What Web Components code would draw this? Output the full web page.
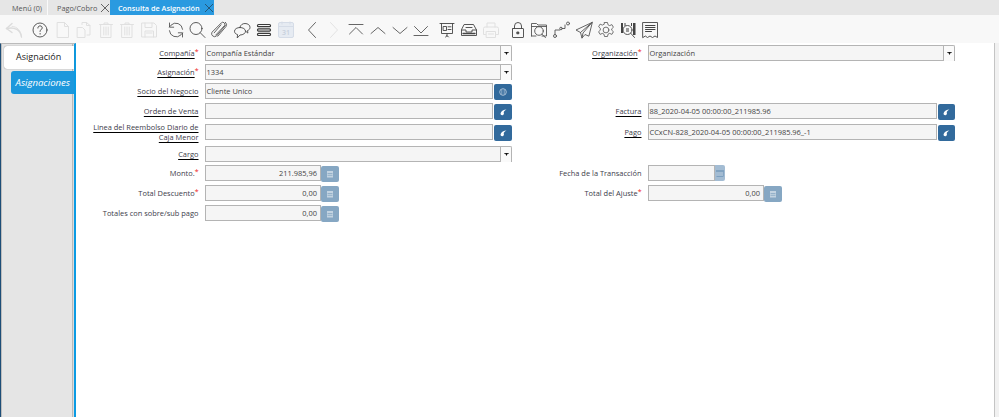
<!DOCTYPE html>
<html lang="es"><head><meta charset="utf-8"><title>Consulta de Asignación</title>
<style>
html,body{margin:0;height:100%;overflow:hidden;background:#fff;font-family:"Open Sans",sans-serif}
body{display:flex;flex-direction:column;width:999px;height:417px}
.main{flex:1;display:flex;min-height:0;background:#f1f1f1}
</style></head><body>
<erp-tabs>
  <erp-tab w="48" style="--pl:12px">Menú (0)</erp-tab>
  <erp-tab w="62" closable style="--pl:9px">Pago/Cobro</erp-tab>
  <erp-tab w="104" closable active style="--pl:8px">Consulta de Asignación</erp-tab>
</erp-tabs>
<erp-toolbar></erp-toolbar>
<div class="main">
  <erp-sidebar>
    <erp-side-tab selected>Asignación</erp-side-tab>
    <erp-side-tab>Asignaciones</erp-side-tab>
  </erp-sidebar>
  <erp-form>
    <erp-field style="grid-area:1/1" label="Compañía" req link kind="select" value="Compañía Estándar"></erp-field>
    <erp-field style="grid-area:1/2" side="r" label="Organización" req link kind="select" value="Organización"></erp-field>
    <erp-field style="grid-area:2/1" label="Asignación" req link kind="select" value="1334"></erp-field>
    <erp-field style="grid-area:3/1" label="Socio del Negocio" link kind="bp" value="Cliente Unico"></erp-field>
    <erp-field style="grid-area:4/1" label="Orden de Venta" link kind="search"></erp-field>
    <erp-field style="grid-area:4/2" side="r" label="Factura" link kind="search" value="88_2020-04-05 00:00:00_211985.96"></erp-field>
    <erp-field style="grid-area:5/1" label="Linea del Reembolso Diario de Caja Menor" link kind="search"></erp-field>
    <erp-field style="grid-area:5/2" side="r" label="Pago" link kind="search" value="CCxCN-828_2020-04-05 00:00:00_211985.96_-1"></erp-field>
    <erp-field style="grid-area:6/1" label="Cargo" link kind="select"></erp-field>
    <erp-field style="grid-area:7/1" label="Monto." req kind="calc" value="211.985,96"></erp-field>
    <erp-field style="grid-area:7/2" side="r" label="Fecha de la Transacción" kind="date"></erp-field>
    <erp-field style="grid-area:8/1" label="Total Descuento" req kind="calc" value="0,00"></erp-field>
    <erp-field style="grid-area:8/2" side="r" label="Total del Ajuste" req kind="calc" value="0,00"></erp-field>
    <erp-field style="grid-area:9/1" label="Totales con sobre/sub pago" kind="calc" value="0,00"></erp-field>
  </erp-form>
</div>
<script>
const D='#e0e0e0', K='#555555', S='#4a4a4a';
const g=(c,w,body)=>`<g fill="none" stroke="${c}" stroke-width="${w}" stroke-linecap="round" stroke-linejoin="round">${body}</g>`;
const ICONS={
 undo:g('#dcdcdc',1.4,'<path d="M2.500 8.500 8 3.500M2.500 8.500 8 12.500"/><path d="M2.500 8.500C11 6.500 16.500 10 17.500 17"/><path d="M8 6.300c5 .3 9 4 9.500 10.700" stroke-width=".8"/>'),
 help:g(S,.9,'<circle cx="10" cy="10" r="7"/><path d="M7.900 8c0-1.400 1-2.100 2.200-2.100s2.100.8 2.100 1.900c0 1.700-2.200 1.800-2.200 3.600" stroke-width="1"/><path d="M10.100 13.500v.5" stroke-width="1.100"/>'),
 doc:g(D,1,'<path d="M4.500 2.500h7l4 4v11h-11zM11.500 2.500v4h4"/>'),
 copy:g(D,1,'<path d="M3.500 7.500h5l2.500 2.500v7.500h-7.500zM8 4.500V2.500h4.500l3.500 3v9.500h-3"/><path d="M12.500 2.500v3h3.500"/>'),
 trash:g(D,1,'<path d="M3.500 4.500h13M8 4.500V3h4v1.500M5 4.500h10v13H5zM7.800 7v8M10 7v8M12.200 7v8"/>'),
 save:g(D,1,'<path d="M3 3h12l2.500 2.500V17H3zM6 3v4.500h7V3M6 17v-6h8.500v6M7.500 13h5.500"/>'),
 refresh:g(K,.9,'<path d="M16.600 9.300A6.800 6.800 0 0 0 5 5.200L3.400 7"/><path d="M3.500 3v4.200h4.200" /><path d="M3.400 10.700A6.800 6.800 0 0 0 15 14.800L16.600 13"/><path d="M16.500 17v-4.200h-4.200"/>'),
 search:g(S,.9,'<circle cx="9" cy="8.500" r="6"/><path d="M13.300 12.800 18 17.500"/>'),
 attach:g(K,.9,'<path d="M16.300 5.500 7.500 16a3 3 0 0 1-4.500-3.800L12.300 2.900a2.100 2.100 0 0 1 3.200 2.700L6.800 15"/><path d="M5.200 12.800 12 4.800M8.800 16.200 17 6.500a3.300 3.300 0 0 0-.5-4.200"/>'),
 chat:g(S,.9,'<path d="M8 7.500c3 0 5.500 1.500 5.500 3.700S11 15 8 15l-2.800 3 .4-3.400C3.500 14 2.500 12.800 2.500 11.200 2.500 9 5 7.500 8 7.500z"/><path d="M8 7c.5-2 2.500-3.500 5-3.500 3 0 5 1.700 5 3.800 0 1.500-.8 2.700-2.500 3.200l.4 2.600-2.600-2.200"/>'),
 list:g('#3a3a3a',1.200,'<rect x="3.500" y="4.500" width="13" height="2.200" rx="1"/><rect x="3.500" y="8.900" width="13" height="2.200" rx="1"/><rect x="3.500" y="13.300" width="13" height="2.200" rx="1"/>'),
 cal:`<rect x="2.500" y="2.500" width="15" height="15" rx="1.500" fill="#e6ebf2" stroke="#d5dce7"/><path d="M2.500 6.500h15" stroke="#d5dce7"/><path d="M6 1.500v3M14 1.500v3" stroke="#d5dce7"/><text x="10" y="15" font-size="7" font-family="Open Sans" font-weight="600" text-anchor="middle" fill="#c8d0dc">31</text>`,
 prev:g(K,.9,'<path d="M13.500 2.500 6.500 10l7 7.500"/>'),
 next:g(D,.9,'<path d="M6.500 2.500l7 7.500-7 7.500"/>'),
 first:g(K,.9,'<path d="M3 4.500h14M3.500 14 10 7.500l6.500 6.500"/>'),
 up:g(K,.9,'<path d="M3 13.500 10 7.500l7 6"/>'),
 down:g(K,.9,'<path d="M3 7.500l7 6 7-6"/>'),
 last:g(K,.9,'<path d="M3.500 6.500 10 13l6.500-6.500M3 15.500h14"/>'),
 report:g('#444',.9,'<path d="M3 3.500h14M4.500 3.500v10h11v-10M6.500 6.500h3v4h-3zM11 6.800h3M11 9.500h3M10 13.500v3M8.500 17l1.500-1.500 1.500 1.500"/>'),
 archive:g('#444',.9,'<path d="M5.500 4.500h9l3 5.500v5.500h-15V10zM2.500 10H7v2h6v-2h4.500M7 7.500h6"/><path d="M4 13.500h12" stroke-width="1.300"/>'),
 print:g(D,1,'<path d="M6 7V3h8v4M4.500 14.500H2.500V8.500a1.500 1.500 0 0 1 1.500-1.500h12a1.500 1.500 0 0 1 1.500 1.500v6h-2M5.500 11.500h9v6h-9zM7.500 14h5"/>'),
 lock:g('#444',.9,'<rect x="4.500" y="8.500" width="11" height="9" rx=".5"/><path d="M6.500 8.500V6a3.500 3.500 0 0 1 7 0v2.500"/><rect x="9.200" y="12" width="1.600" height="1.800" fill="#444"/>'),
 zoom:g(K,.9,'<path d="M2.500 16V3.500h5l1.500 1.500h8.500v11H13M2.500 16H7M2.500 6.500h15"/><circle cx="10" cy="11" r="4.300"/><path d="M13 14.200l3.500 3.500"/>'),
 flow:g(K,.9,'<circle cx="4" cy="16" r="1.500"/><circle cx="10" cy="8.500" r="1.300" /><circle cx="17" cy="3.500" r="1.500"/><path d="M4 14.500V10h4.700M11.300 8.500H14V5"/>'),
 send:g(K,.9,'<path d="M18 2.500 2 10l4.500 2.500L8 18l3-3.500 3.500 1.500zM18 2.500 6.500 12.500M18 2.500 9 13l-1 5"/>'),
 gear:g('#666',.9,'<path d="M8.500 2.500h3l.5 2.300 1.700.8 2.200-1 1.500 2.700-1.700 1.500v1.400l1.700 1.500-1.500 2.700-2.200-1-1.700.8-.5 2.300h-3l-.5-2.300-1.700-.8-2.200 1-1.500-2.700 1.700-1.500V8.300L2.600 6.800l1.500-2.700 2.200 1 1.700-.8z"/><circle cx="10" cy="10" r="2.900"/>'),
 barcode:`<g fill="#444"><rect x="3" y="3" width="2" height="10"/><rect x="6.500" y="3" width="1" height="3"/><rect x="13" y="3" width="1" height="3"/><rect x="15" y="3" width="2.500" height="12"/></g>`+g('#444',.9,'<circle cx="9.500" cy="10" r="4.500"/><path d="M12.800 13.300 16.500 17.500"/>')+'<rect x="8" y="8" width="3" height="4" fill="#999"/>',
 receipt:g('#444',.9,'<path d="M3 2.500h14.500v15l-2.500-1.500-2.500 1.500-2.500-1.500-2.500 1.500-2.200-1.500L3 17.500z"/><path d="M5.500 5.500h9.500M5.500 7.500h9.500M5.500 9.500h9.500M5.500 11.500h6" stroke-width="1"/>')
};
const BAR=[['undo',14],['help',40],['doc',63],['copy',84],['trash',106],['trash',127],['save',149],['refresh',176],['search',197],['attach',219],['chat',242],['list',264],['cal',286],['prev',312],['next',334],['first',356],['up',378],['down',400],['last',421],['report',447],['archive',469],['print',491],['lock',518],['zoom',539],['flow',561],['send',584],['gear',606],['barcode',628],['receipt',650]];

class Base extends HTMLElement{
  render(html){ (this.shadowRoot||this.attachShadow({mode:'open'})).innerHTML=html; }
}
customElements.define('erp-tabs',class extends Base{connectedCallback(){this.render(`<style>
:host{display:flex;height:15px;background:#e6e6e6;flex:none}</style><slot></slot>`)}});
customElements.define('erp-tab',class extends Base{connectedCallback(){
 const a=this.hasAttribute('active'),c=this.hasAttribute('closable');
 this.render(`<style>
:host{display:flex;align-items:center;box-sizing:border-box;width:${this.getAttribute('w')}px;height:15px;padding-left:var(--pl);font:${a?600:400} 7.300px "Open Sans",sans-serif;white-space:nowrap;position:relative;
 color:${a?'#fff':'#555'};background:${a?'#2a9ae0':'transparent'};${!c?'border-right:1px solid #fafafa;':''}}
svg{position:absolute;right:0;top:3px}
</style><slot></slot>${c?`<svg width="10" height="10" viewBox="0 0 10 10"><path d="M1 1l8 8M9 1 1 9" stroke="${a?'#24506f':'#555'}" stroke-width=".9" fill="none"/></svg>`:''}`);
}});
customElements.define('erp-toolbar',class extends Base{connectedCallback(){
 let x=0,h='';
 for(const [n,c] of BAR){const left=c-10-x;h+=`<svg style="margin-left:${left}px" width="20" height="20" viewBox="0 0 20 20">${ICONS[n]}</svg>`;x=c+10;}
 this.render(`<style>:host{display:flex;align-items:center;flex:none;height:28px;background:#f8f8f8}svg{flex:none;margin-top:1px}</style>${h}`);
}});
customElements.define('erp-sidebar',class extends Base{connectedCallback(){this.render(`<style>
:host{display:flex;flex-direction:column;align-items:flex-end;box-sizing:border-box;width:76px;flex:none;padding-top:2px;gap:1.500px;background:#e5e5e5;
 border-left:1px solid #1d4e78;border-right:2px solid #0b9be3;box-shadow:inset 1px 0 0 #bdbdbd,inset -1px 0 0 #dcdcdc,inset -2px 0 0 #b9b9b9;border-top:1px solid #bbb}
</style><slot></slot>`)}});
customElements.define('erp-side-tab',class extends Base{connectedCallback(){
 const s=this.hasAttribute('selected');
 this.render(`<style>
:host{display:flex;align-items:center;box-sizing:border-box;font:${s?'normal':'italic'} 400 ${s?9:9.600}px "Open Sans",sans-serif;white-space:nowrap;
 ${s?'width:70px;height:23px;padding-bottom:2px;background:#fff;color:#222;padding-left:12px;border-radius:3px 0 0 3px;box-shadow:0 0 1px #666':'width:63px;height:23px;background:#1d98dc;color:#fff;padding-left:4.500px;border-radius:3px 0 0 3px'}}
</style><slot></slot>`);
}});
customElements.define('erp-form',class extends Base{connectedCallback(){this.render(`<style>
:host{display:grid;flex:1;box-sizing:border-box;grid-template-columns:436px 443px;grid-template-rows:19px 19px 20px 21px 22px 19px 20px 20px 16px;align-content:start;
 padding-top:2px;background:#fff;position:relative;border-right:1px solid #c4c4c4;margin-right:4px;}
</style><slot></slot>`)}});
const CALC=`<svg width="8" height="8" viewBox="0 0 8 8"><rect x="1" y="1" width="6" height="6.500" fill="#c3d3e1"/><path d="M1.500 3.500h5M1.500 5.300h5" stroke="#88a8c4" stroke-width=".8"/></svg>`;
const QUOTE=`<svg width="9" height="9" viewBox="0 0 9 9"><path d="M7.500 1.500C5 1.700 2 3 1.600 5.200c-.3 1.300.7 2.100 1.700 2 1.300-.1 2-1.300 1.500-2.400C4.600 4.200 5 3.300 5.700 2.700 6.200 2.200 7 1.800 7.500 1.500z" fill="#fff"/></svg>`;
const BP=`<svg width="10" height="10" viewBox="0 0 10 10"><circle cx="5" cy="5" r="3.300" fill="none" stroke="#a9c0d6" stroke-width="1"/><path d="M3.800 2.500v5M6.200 2.500v5" stroke="#a9c0d6" stroke-width=".8"/></svg>`;
const DATE=`<svg width="10" height="10" viewBox="0 0 10 10"><path d="M1 3h8" stroke="#6b93b6" stroke-width="1.200"/><path d="M1.500 8.500h7" stroke="#7ca0c0" stroke-width="1"/><path d="M8.500 3v5" stroke="#7ca0c0" stroke-width=".8"/></svg>`;
const CARET=`<svg width="5" height="3" viewBox="0 0 6 4"><path d="M0 0h6v1H4.500L3 4 1.500 1H0z" fill="#111"/></svg>`;
customElements.define('erp-field',class extends Base{connectedCallback(){
 const g=n=>this.getAttribute(n)||'',kind=g('kind'),r=g('side')==='r',link=this.hasAttribute('link');
 const inW={select:296,search:r?289:288,bp:288,calc:116,date:67}[kind], bw={select:11,search:r?17.500:18,bp:18,calc:18,date:10}[kind];
 let btn='';
 if(kind==='select')btn=`<div class="b sel">${CARET}</div>`;
 if(kind==='search')btn=`<div class="b act">${QUOTE}</div>`;
 if(kind==='bp')btn=`<div class="b act">${BP}</div>`;
 if(kind==='calc')btn=`<div class="b dis">${CALC}</div>`;
 if(kind==='date')btn=`<div class="b dat">${DATE}</div>`;
 const gapB=(kind==='search'||kind==='bp')?1:0;
 this.render(`<style>
:host{display:grid;grid-template-columns:${r?129.500:122.500}px 1fr;column-gap:6.500px;align-items:start;font:7.450px "Open Sans",sans-serif;color:#3c3c4a;height:16px}
.l{height:16px;display:flex;align-items:center;justify-content:flex-end;text-align:right;line-height:10px}
.l>span{max-width:115px}
.l span.t{${link?'text-decoration:underline;text-decoration-color:#000;text-underline-offset:1.500px;':''}}
.s{color:#e22;font-size:7px;line-height:0;position:relative;top:-2px}
.c{display:flex;height:16px;width:307px}
.i{box-sizing:border-box;width:${inW}px;height:16px;background:#f5f5f5;border:1px solid #b4b4b4;padding:0 3px 0 .5px;display:flex;align-items:center;justify-content:${kind==='calc'?'flex-end':'flex-start'};white-space:nowrap;color:#444;overflow:hidden}
.b{box-sizing:border-box;width:${bw}px;height:16px;margin-left:${gapB}px;display:flex;align-items:center;justify-content:center;flex:none}
.act{background:#326a9c;border-radius:2px;margin-top:1px}
.dis{background:#86a7c3;border-radius:2px;margin-top:1px}
.dat{background:#a3bcd3;border-radius:0 2px 2px 0}
.sel{background:#fafafa;border:1px solid #b4b4b4;border-left:0;border-bottom:0;border-radius:0 2px 0 0}
</style><div class="l"><span><span class="t">${g('label')}</span>${this.hasAttribute('req')?'<span class="s">*</span>':''}</span></div>
<div class="c"><div class="i">${g('value')}</div>${btn}</div>`);
}});
</script>
</body></html>
